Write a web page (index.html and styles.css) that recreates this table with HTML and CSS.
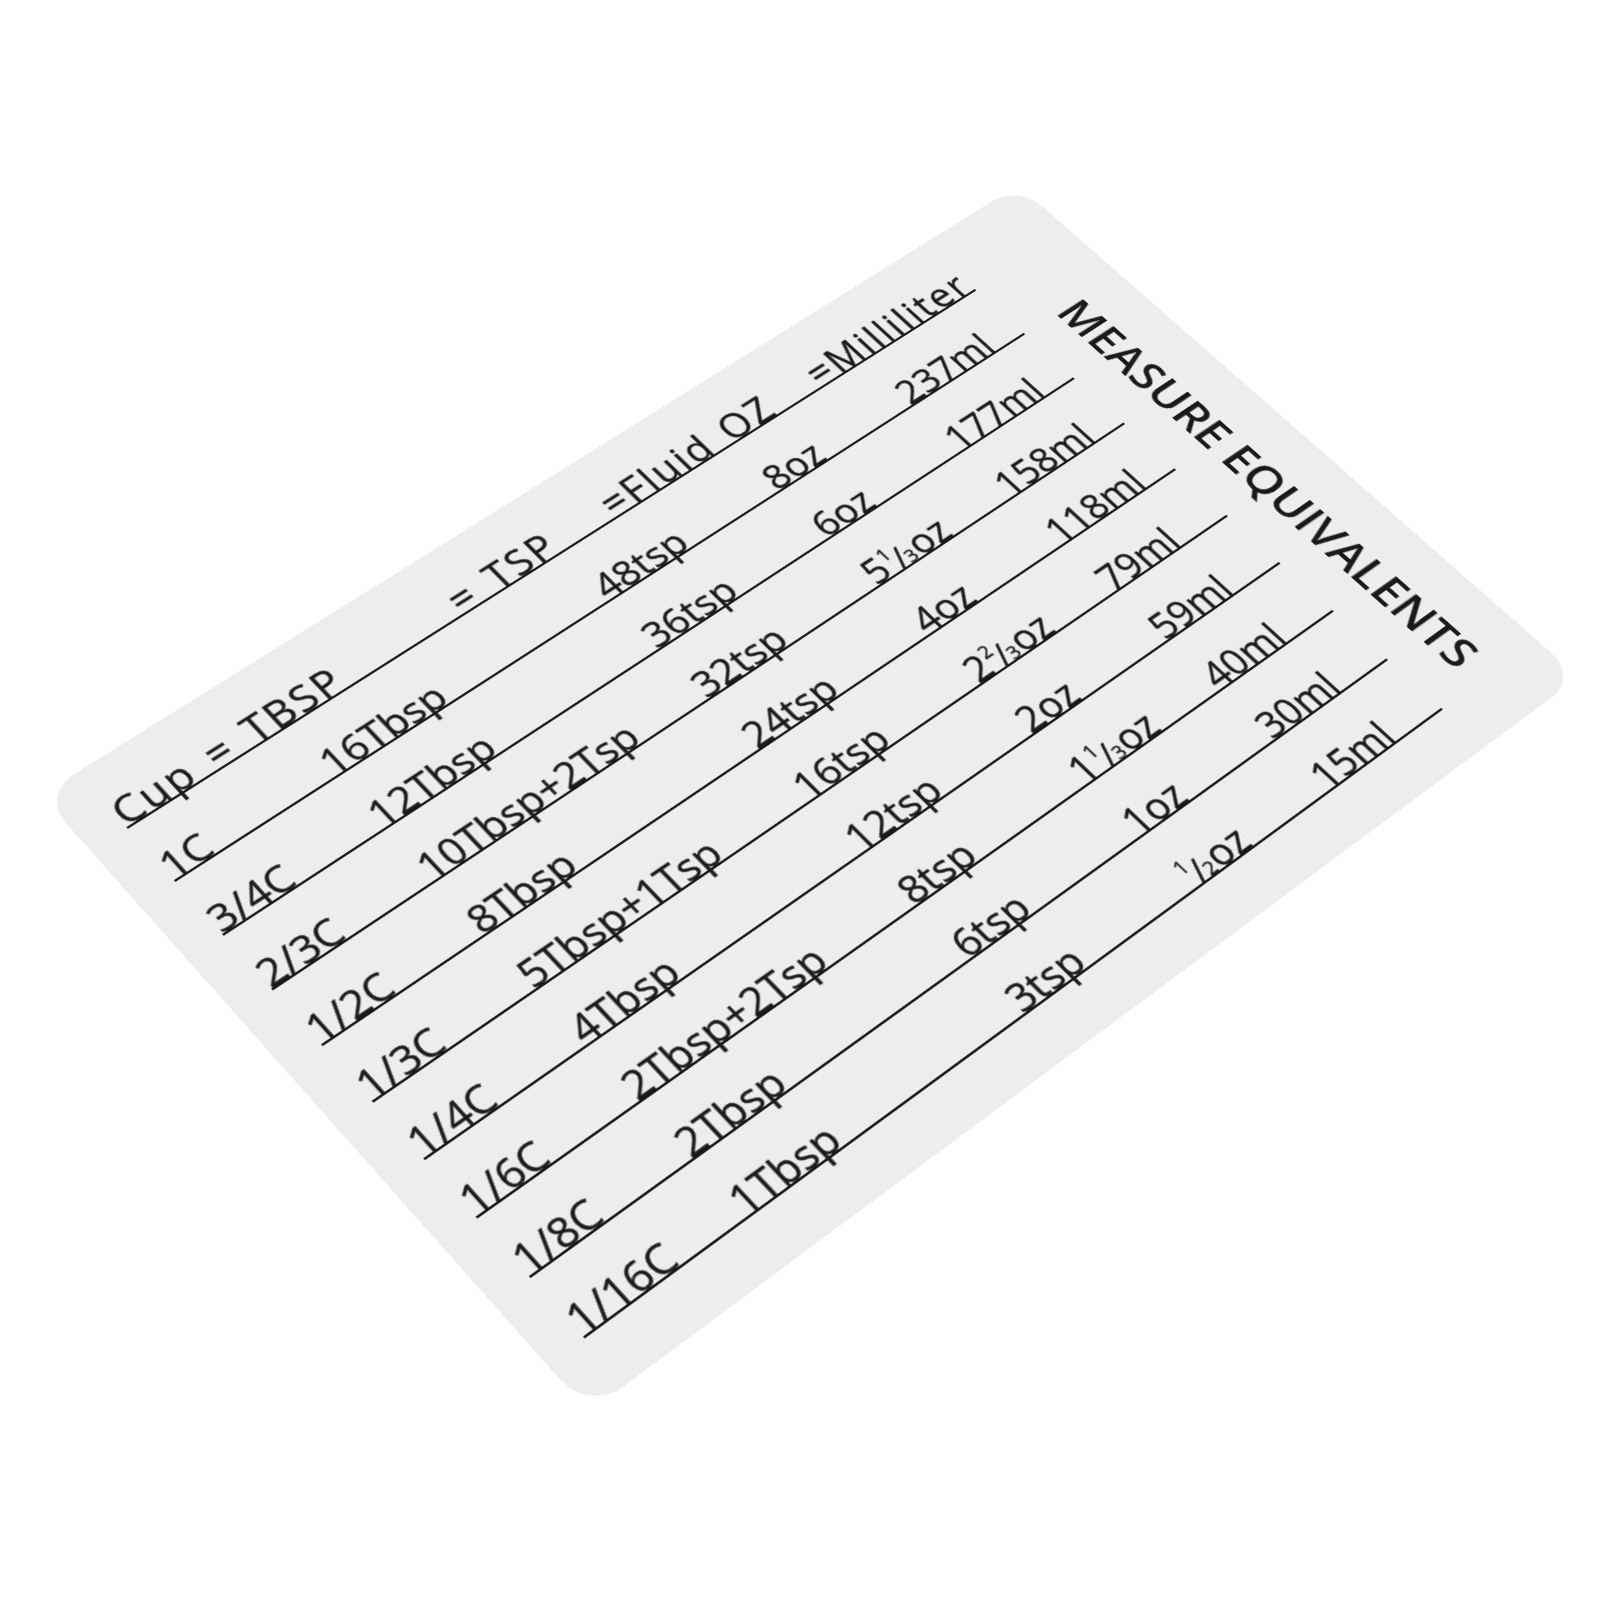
FILE: index.html
```html
<!DOCTYPE html>
<html lang="en">
<head>
<meta charset="utf-8">
<title>Measure Equivalents Card</title>
<link rel="stylesheet" href="styles.css">
</head>
<body>
<div class="stage">
  <div class="card">
    <div class="table">
      <div class="row head">
        <span class="cell">Cup = TBSP</span>
        <span class="cell">= TSP</span>
        <span class="cell">=Fluid OZ</span>
        <span class="cell">=Milliliter</span>
      </div>
      <div class="row">
        <span class="cell">1C</span><span class="cell">16Tbsp</span><span class="cell">48tsp</span><span class="cell">8oz</span><span class="cell">237ml</span>
      </div>
      <div class="row">
        <span class="cell">3/4C</span><span class="cell">12Tbsp</span><span class="cell">36tsp</span><span class="cell">6oz</span><span class="cell">177ml</span>
      </div>
      <div class="row">
        <span class="cell">2/3C</span><span class="cell">10Tbsp+2Tsp</span><span class="cell">32tsp</span><span class="cell">5<span class="fr"><span class="num">1</span><span class="sl">/</span><span class="den">3</span></span>oz</span><span class="cell">158ml</span>
      </div>
      <div class="row">
        <span class="cell">1/2C</span><span class="cell">8Tbsp</span><span class="cell">24tsp</span><span class="cell">4oz</span><span class="cell">118ml</span>
      </div>
      <div class="row">
        <span class="cell">1/3C</span><span class="cell">5Tbsp+1Tsp</span><span class="cell">16tsp</span><span class="cell">2<span class="fr"><span class="num">2</span><span class="sl">/</span><span class="den">3</span></span>oz</span><span class="cell">79ml</span>
      </div>
      <div class="row">
        <span class="cell">1/4C</span><span class="cell">4Tbsp</span><span class="cell">12tsp</span><span class="cell">2oz</span><span class="cell">59ml</span>
      </div>
      <div class="row">
        <span class="cell">1/6C</span><span class="cell">2Tbsp+2Tsp</span><span class="cell">8tsp</span><span class="cell">1<span class="fr"><span class="num">1</span><span class="sl">/</span><span class="den">3</span></span>oz</span><span class="cell">40ml</span>
      </div>
      <div class="row">
        <span class="cell">1/8C</span><span class="cell">2Tbsp</span><span class="cell">6tsp</span><span class="cell">1oz</span><span class="cell">30ml</span>
      </div>
      <div class="row">
        <span class="cell">1/16C</span><span class="cell">1Tbsp</span><span class="cell">3tsp</span><span class="cell"><span class="fr"><span class="num">1</span><span class="sl">/</span><span class="den">2</span></span>oz</span><span class="cell">15ml</span>
      </div>
    </div>
    <div class="side">
      <div class="title">MEASURE EQUIVALENTS</div>
    </div>
  </div>
</div>
</body>
</html>
```

FILE: styles.css
```css
html, body {
  margin: 0;
  padding: 0;
  background: #ffffff;
}

.stage {
  width: 1600px;
  height: 1600px;
  overflow: hidden;
  background: #ffffff;
}

.card {
  width: 1000px;
  height: 650px;
  box-sizing: border-box;
  padding: 5px 0 0 33px;
  display: flex;
  background: #ededed;
  border-radius: 30px;
  color: #1a1a1a;
  font-family: "Open Sans", "DejaVu Sans", sans-serif;
  transform-origin: 0 0;
  transform: matrix3d(1.10626, -0.58651, 0, 0.00012697,
                      0.76598, 0.76442, 0, -0.00013089,
                      0, 0, 1, 0,
                      41, 795, 0, 1);
}

.table {
  width: 860px;
  flex: none;
  display: flex;
  flex-direction: column;
}

.row {
  display: grid;
  grid-template-columns: 149px 268px 175px 143px 1fr;
  align-items: end;
  height: 60px;
  box-sizing: border-box;
  border-bottom: 2px solid #1a1a1a;
}

.row.head {
  grid-template-columns: 319px 154px 217px 1fr;
}

.cell {
  font-size: 33px;
  font-weight: 400;
  line-height: 1;
  margin-bottom: -0.112em;
  white-space: nowrap;
  -webkit-text-stroke: 0.35px #1a1a1a;
}

.row.head .cell {
  font-size: 34px;
  letter-spacing: 0.06em;
  word-spacing: 0.12em;
}

.fr {
  display: inline-block;
  line-height: 1;
  margin: 0 0.02em;
}

.fr .num {
  position: relative;
  top: -0.85em;
  font-size: 0.5em;
}

.fr .sl {
  font-size: 0.85em;
  margin: 0 -0.04em;
}

.fr .den {
  font-size: 0.5em;
}

.side {
  flex: 1;
  display: flex;
  justify-content: center;
  align-items: flex-start;
  padding: 118px 7px 0 0;
}

.title {
  writing-mode: vertical-rl;
  font-size: 40px;
  font-weight: 600;
  line-height: 1;
  white-space: nowrap;
}
```
